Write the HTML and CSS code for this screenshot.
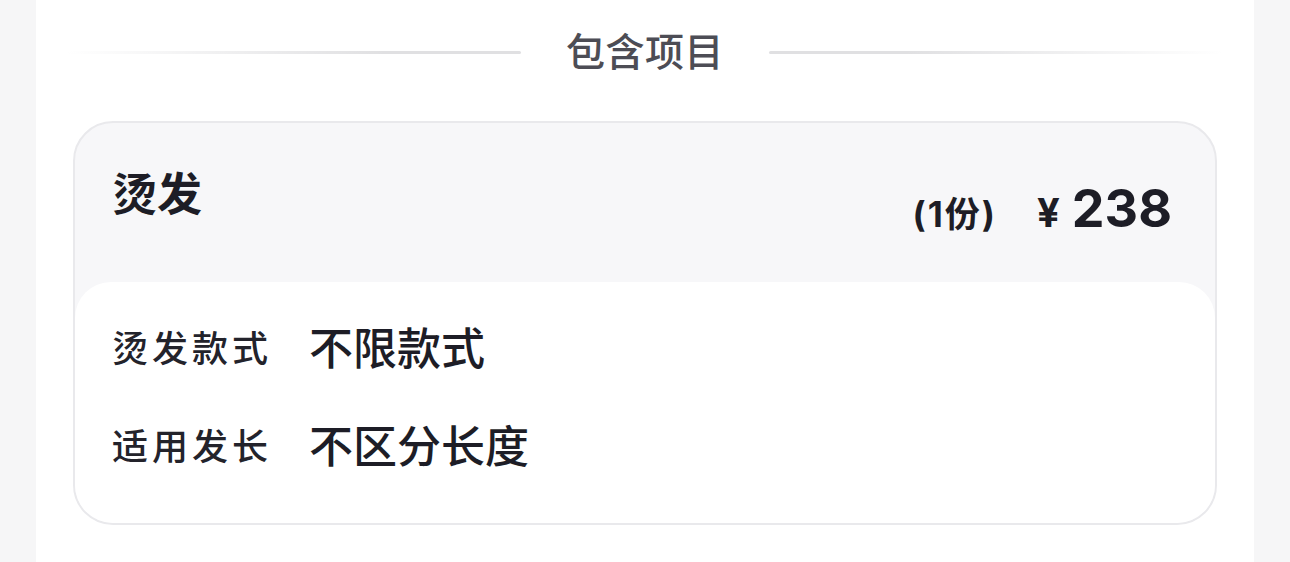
FILE: index.html
```html
<!DOCTYPE html>
<html lang="zh-CN">
<head>
  <meta charset="UTF-8">
  <meta name="viewport" content="width=device-width, initial-scale=1.0">
  <title>包含项目</title>
  <link rel="stylesheet" href="styles.css">
</head>
<body>
  <div class="panel">
    <div class="section-title">
      <span class="line line-left"></span>
      <h2>包含项目</h2>
      <span class="line line-right"></span>
    </div>

    <div class="item-card">
      <div class="item-head">
        <h3>烫发</h3>
        <div class="item-price">
          <span class="qty">(1份)</span>
          <span class="yen">¥</span>
          <span class="amount">238</span>
        </div>
      </div>
      <div class="item-body">
        <div class="spec-row">
          <span class="spec-label">烫发款式</span>
          <span class="spec-value">不限款式</span>
        </div>
        <div class="spec-row">
          <span class="spec-label">适用发长</span>
          <span class="spec-value">不区分长度</span>
        </div>
      </div>
    </div>
  </div>
</body>
</html>
```

FILE: styles.css
```css
* {
  margin: 0;
  padding: 0;
  box-sizing: border-box;
}
body {
  font-family: Inter, "Noto Sans CJK SC", sans-serif;
  background-color: #f6f6f7;
  color: #1d1d26;
}
.panel {
  margin: 0 36px;
  background-color: white;
  padding: 24px 37px 40px;
  min-height: 562px;
}
.section-title {
  display: flex;
  align-items: center;
  gap: 45px;
  margin: 0 -7px 41px;
}
.section-title h2 {
  font-size: 39px;
  font-weight: 500;
  line-height: 56px;
  color: #4d4d55;
  letter-spacing: 0.5px;
}
.line {
  flex: 1;
  height: 3px;
  border-radius: 2px;
}
.line-left {
  background: linear-gradient(to right, rgba(224, 224, 226, 0), #e0e0e2 70%);
}
.line-right {
  background: linear-gradient(to left, rgba(224, 224, 226, 0), #e0e0e2 70%);
}
.item-card {
  border: 2px solid #e9e9ec;
  border-radius: 40px;
  background-color: #f7f7f9;
  overflow: hidden;
}
.item-head {
  height: 159px;
  display: flex;
  justify-content: space-between;
  align-items: flex-start;
  padding: 44px 43px 0 37px;
}
.item-head h3 {
  font-size: 45px;
  font-weight: 700;
  line-height: 56px;
}
.item-price {
  display: flex;
  align-items: baseline;
  margin-top: 14px;
}
.qty {
  font-size: 35px;
  font-weight: 700;
  letter-spacing: 2px;
  margin-right: 40px;
}
.yen {
  font-size: 40px;
  font-weight: 700;
  margin-right: 12px;
}
.amount {
  font-size: 52px;
  font-weight: 700;
  line-height: 56px;
}
.item-body {
  background-color: white;
  border-radius: 36px 36px 0 0;
  padding: 32px 37px 55px;
  display: flex;
  flex-direction: column;
  gap: 42px;
}
.spec-row {
  display: grid;
  grid-template-columns: 197px 1fr;
  align-items: center;
  height: 56px;
}
.spec-label {
  font-size: 36px;
  font-weight: 500;
  letter-spacing: 4px;
  color: #23232b;
}
.spec-value {
  font-size: 44px;
  font-weight: 500;
  color: #1d1d26;
}
```
